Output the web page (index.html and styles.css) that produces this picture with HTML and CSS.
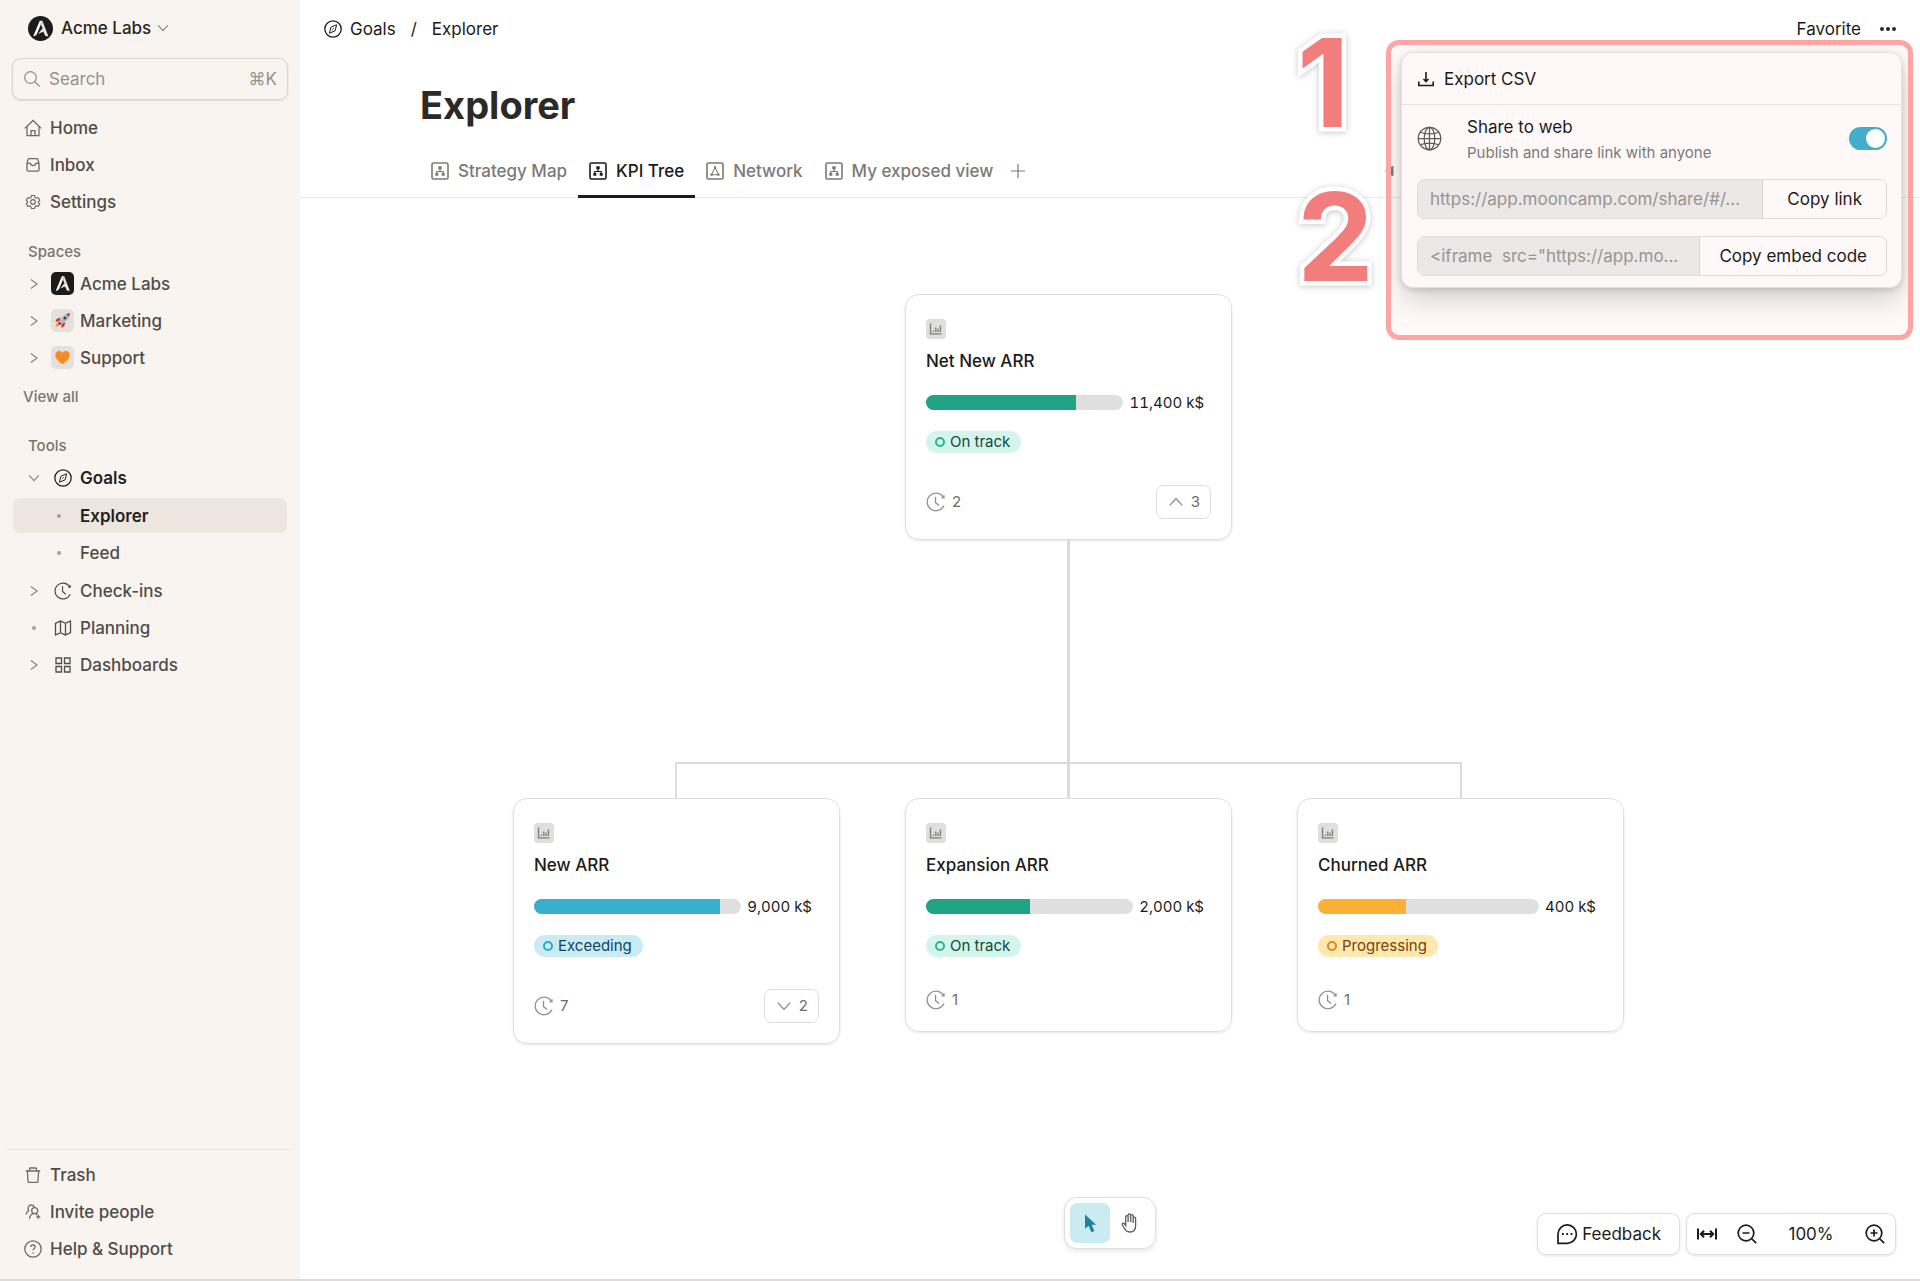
FILE: index.html
```html
<!DOCTYPE html>
<html lang="en">
<head>
  <meta charset="UTF-8" />
  <meta name="viewport" content="width=device-width, initial-scale=1" />
  <title>Explorer - Acme Labs</title>
  <link rel="stylesheet" href="styles.css">
</head>
<body>
  <!-- Icon set -->
  <svg class="sprite" aria-hidden="true">
    <symbol id="logo" viewBox="0 0 24 24">
      <path d="M5 19.5 11.3 4.5h2.5L8.6 17.1c-.9 1.8-2 2.4-3.6 2.4z" fill="#fff" />
      <path d="M13.8 4.5 19.6 19.5h-2.8l-2.2-4.4-5 2.2 3.6-4.5.8-.9-1.5-3.8z" fill="#e4e4e4" />
    </symbol>
    <symbol id="down" viewBox="0 0 16 16"><path d="M2.5 5L8 11l5.500-6" /></symbol>
    <symbol id="up" viewBox="0 0 16 16"><path d="M2.500 11L8 5l5.500 6" /></symbol>
    <symbol id="right" viewBox="0 0 16 16"><path d="M4.500 2.800L11.500 8l-7 5.200" /></symbol>
    <symbol id="search" viewBox="0 0 18 18"><circle cx="7.5" cy="7.5" r="5.8" /><path d="M11.8 11.8l4.9 4.7" /></symbol>
    <symbol id="home" viewBox="0 0 18 18"><path d="M.8 9.4L9 1.5l8.2 7.9M3 7.6v9h12v-9M7 16.5v-4.9h4v4.9" /></symbol>
    <symbol id="inbox" viewBox="0 0 18 18"><path d="M3 7.3l1.2-4Q4.500 2.700 5.200 2.700h7.600q.7 0 1 .6l1.200 4v6.500q0 1.400-1.400 1.400H4.400Q3 15.200 3 13.800zM3 7.300h3.400c.3 3 4.900 3 5.200 0H15" /></symbol>
    <symbol id="gear" viewBox="-1 -1 20 20"><path d="M7.300 1.800h3.400l.6 2.200 1.300.8 2.200-.6 1.700 2.900L15 8.700v.8l1.500 1.500-1.700 2.900-2.200-.6-1.300.8-.6 2.100H7.300l-.6-2.100-1.300-.8-2.200.6L1.500 11 3 9.500v-.8L1.500 7.100l1.700-2.900 2.200.6L6.700 4z" /><circle cx="9" cy="9" r="2.600" /></symbol>
    <symbol id="compass" viewBox="0 0 18 18"><circle cx="9" cy="9" r="8.200" /><path d="M12.600 4.800l-1.500 6-5.700 2.400 1.500-6zM8.300 9.700l1.400-1.400" stroke-width="1" /></symbol>
    <symbol id="clock" viewBox="0 0 20 20"><path d="M17.200 5A8.800 8.800 0 1 0 18 13.500M18 3.300v2.500h-2.500M9.500 4.800v5.800l3.500 3" /></symbol>
    <symbol id="map" viewBox="0 0 18 18"><path d="M1.500 4.300L6.500 2l5 2.300 5-2.300v11.700l-5 2.300-5-2.300-5 2.300zM6.500 2v11.700M11.500 4.300V16" /></symbol>
    <symbol id="grid" viewBox="0 0 18 18"><path d="M2 2h5.500v5.500H2zM10.500 2H16v5.500h-5.500zM2 10.500h5.500V16H2zM10.500 10.500H16V16h-5.500z" /></symbol>
    <symbol id="trash" viewBox="0 0 18 18"><path d="M1.800 5h14.400M5 5l1-3h6l1 3M3.300 5l.8 10.400q0 1 1 1h7.800q1 0 1-1L14.700 5" /></symbol>
    <symbol id="invite" viewBox="0 0 18 18"><path d="M2 11.500c.3-2 1.200-3 2.600-3.800C3.200 5 4.700 2 7.300 2c1.600 0 2.600.8 3 2.200M5.500 15.800c.3-2.600 1.500-4.400 3.300-5.300" /><circle cx="10.700" cy="7.700" r="3" /><path d="M12 10.800l1 1.200M14.300 11.800v4M12.300 13.800h4" /></symbol>
    <symbol id="help" viewBox="0 0 18 18"><circle cx="9" cy="9" r="8.200" /><path d="M6.800 7c.2-3 4.700-2.600 4.400 0-.2 1.400-2.200 1.500-2.200 3.200M9 12.200v1.200" /></symbol>
    <symbol id="tree" viewBox="0 0 18 18"><rect x="1" y="1" width="16" height="16" rx="1.500" /><path d="M9 7v2.500M5.800 11.500v-2h6.400v2" stroke-width="1.200" /><path d="M7.300 4.300h3.400v3H7.300zM4.300 10.900h3v2.800h-3zM10.700 10.900h3v2.800h-3z" fill="currentColor" stroke="none" /></symbol>
    <symbol id="network" viewBox="0 0 18 18"><rect x="1" y="1" width="16" height="16" rx="1.500" /><path d="M9 5.500L5.800 12M9 5.500l3.200 6.500M6 12.700h6" stroke-width="1" /><path d="M8 4.200h2v2.400H8zM4.500 11.500h2.200v2.200H4.500zM11.300 11.500h2.200v2.200h-2.200z" fill="currentColor" stroke="none" /></symbol>
    <symbol id="plus" viewBox="0 0 18 18"><path d="M9 2v14M2 9h14" /></symbol>
    <symbol id="chart" viewBox="0 0 14 14"><path d="M1.500 1.500v10.300h11M4.300 8.500V10M6.800 5.500V10M9 6.500V10M11.400 3.500V10" /></symbol>
    <symbol id="download" viewBox="0 0 18 18"><path d="M9 2v9.500M6.500 9L9 11.500 11.500 9M1.800 11.500v4h14.400v-4" /></symbol>
    <symbol id="globe" viewBox="0 0 26 26"><circle cx="13" cy="13" r="11.700" /><ellipse cx="13" cy="13" rx="5.500" ry="11.700" /><path d="M13 1.300v23.400M1.300 13h23.400M3.500 6.500c5 2.400 14 2.400 19 0M3.500 19.500c5-2.400 14-2.400 19 0" /></symbol>
    <symbol id="cursor" viewBox="0 0 22 22"><path d="M6 2.500v14.300l3.600-3 2.800 6.500 3-1.300-2.800-6.200h4.600z" fill="currentColor" stroke="none" /></symbol>
    <symbol id="hand" viewBox="0 0 22 22"><path d="M6.700 12V4.800c0-1.700 2.400-1.700 2.400 0V10 3.200c0-1.800 2.600-1.800 2.600 0V10 3.900c0-1.700 2.500-1.700 2.500 0V11 6.300c0-1.700 2.400-1.700 2.400 0v7.200c0 4-2 6.500-5.500 6.500-4.100 0-5.200-2.500-7.600-6.800-.9-1.700 1-2.700 2-1.400l1.200 1.700z" /></symbol>
    <symbol id="chat" viewBox="0 0 22 22"><path d="M2 20.300V11A9.200 9.200 0 1 1 11.200 20.300z" /><path d="M6 11h1.800M10.300 11h1.800M14.600 11h1.800" stroke-width="2" /></symbol>
    <symbol id="fit" viewBox="0 0 22 22"><path d="M2 5.500v11M20 5.500v11M5 11h12M8 7.800L4.800 11 8 14.200M14 7.800l3.200 3.200-3.200 3.200" stroke-width="2" /></symbol>
    <symbol id="zoom-out" viewBox="0 0 22 22"><circle cx="10" cy="10" r="7.800" /><path d="M15.500 15.500l4.700 4.700M6.500 10h7" /></symbol>
    <symbol id="zoom-in" viewBox="0 0 22 22"><circle cx="10" cy="10" r="7.800" /><path d="M15.500 15.500l4.700 4.700M6.500 10h7M10 6.500v7" /></symbol>
    <symbol id="collapse" viewBox="0 0 10 12"><path d="M9.500 1v10L5 10V7L0 6l5-1V2z" fill="currentColor" stroke="none" /></symbol>
  </svg>

  <div class="app">
    <aside class="sidebar">
      <button class="workspace" type="button">
        <svg class="workspace-logo"><use href="#logo" /></svg>
        Acme Labs
        <svg class="icon icon-xs"><use href="#down" /></svg>
      </button>
      <label class="search">
        <svg class="icon"><use href="#search" /></svg>
        <input type="search" placeholder="Search" aria-label="Search" />
        <kbd>⌘K</kbd>
      </label>

      <nav class="menu">
        <a href="#"><svg class="icon"><use href="#home" /></svg>Home</a>
        <a href="#"><svg class="icon"><use href="#inbox" /></svg>Inbox</a>
        <a href="#"><svg class="icon"><use href="#gear" /></svg>Settings</a>
      </nav>

      <h2 class="section-title">Spaces</h2>
      <nav class="tree-menu">
        <a href="#"><svg class="icon caret"><use href="#right" /></svg><svg class="space space-dark"><use href="#logo" /></svg>Acme Labs</a>
        <a href="#"><svg class="icon caret"><use href="#right" /></svg>
          <svg class="space" viewBox="0 0 23 23">
            <path d="M9.500 8.500L5.500 10 4.500 13l4-1zM14.500 13.500l-1.500 4-3 1 1-4z" fill="#d52b35" />
            <path d="M8 13c-2 0-3 2-3.500 5 3-.5 4.700-1.500 4.800-3.500z" fill="#f8952b" />
            <path d="M18.800 4.200c-4.200.2-8 3.300-10.600 8.300l2.500 2.500c5-2.600 8-6.600 8.100-10.800z" fill="#aebbc7" />
            <path d="M18.800 4.200l-3.600.9 2.700 2.700zM8.200 12.500l2.500 2.500-1.900.9-1.500-1.500z" fill="#b91f32" />
            <circle cx="14" cy="9" r="1.500" fill="#234e79" />
          </svg>Marketing</a>
        <a href="#"><svg class="icon caret"><use href="#right" /></svg>
          <svg class="space" viewBox="0 0 23 23"><path d="M11.500 18.300C7.500 15.500 4.300 12.500 4.300 8.800c0-4 5-5.300 7.200-1.900 2.200-3.400 7.200-2.100 7.200 1.900 0 3.700-3.200 6.700-7.200 9.500z" fill="#f78b1f" /></svg>Support</a>
      </nav>
      <a class="view-all" href="#">View all</a>

      <h2 class="section-title">Tools</h2>
      <nav class="tree-menu">
        <a class="strong" href="#"><svg class="icon caret"><use href="#down" /></svg><svg class="icon tool"><use href="#compass" /></svg>Goals</a>
        <div class="submenu">
          <a class="active" href="#"><span class="bullet"></span>Explorer</a>
          <a href="#"><span class="bullet"></span>Feed</a>
        </div>
        <a href="#"><svg class="icon caret"><use href="#right" /></svg><svg class="icon tool"><use href="#clock" /></svg>Check-ins</a>
        <a href="#"><span class="bullet"></span><svg class="icon tool"><use href="#map" /></svg>Planning</a>
        <a href="#"><svg class="icon caret"><use href="#right" /></svg><svg class="icon tool"><use href="#grid" /></svg>Dashboards</a>
      </nav>

      <nav class="menu menu-bottom">
        <a href="#"><svg class="icon"><use href="#trash" /></svg>Trash</a>
        <a href="#"><svg class="icon"><use href="#invite" /></svg>Invite people</a>
        <a href="#"><svg class="icon"><use href="#help" /></svg>Help &amp; Support</a>
      </nav>
    </aside>

    <main class="main">
      <header class="topbar">
        <nav class="breadcrumb">
          <a href="#"><svg class="icon"><use href="#compass" /></svg>Goals</a>
          <span>/</span>
          <a href="#">Explorer</a>
        </nav>
        <div class="top-actions">
          <button type="button">Favorite</button>
          <button class="dots" type="button" aria-label="More"><i></i><i></i><i></i></button>
        </div>
      </header>

      <h1>Explorer</h1>
      <nav class="tabs">
        <a href="#"><svg class="icon"><use href="#tree" /></svg>Strategy Map</a>
        <a class="active" href="#"><svg class="icon"><use href="#tree" /></svg>KPI Tree</a>
        <a href="#"><svg class="icon"><use href="#network" /></svg>Network</a>
        <a href="#"><svg class="icon"><use href="#tree" /></svg>My exposed view</a>
        <button class="add-view" type="button" aria-label="Add view"><svg class="icon"><use href="#plus" /></svg></button>
        <button class="collapse" type="button" aria-label="Collapse"><svg class="icon"><use href="#collapse" /></svg></button>
      </nav>

      <section class="canvas">
        <div class="kpi-tree">
          <article class="card">
            <svg class="icon kpi-icon"><use href="#chart" /></svg>
            <h3>Net New ARR</h3>
            <div class="progress"><div class="bar"><div class="fill green" style="width: 76%"></div></div>11,400 k$</div>
            <span class="status on-track">On track</span>
            <footer><span class="checkins"><svg class="icon"><use href="#clock" /></svg>2</span>
              <button type="button"><svg class="icon"><use href="#up" /></svg>3</button></footer>
          </article>
          <div class="trunk"></div>
          <div class="fork"></div>
          <div class="children">
            <article class="card">
              <svg class="icon kpi-icon"><use href="#chart" /></svg>
              <h3>New ARR</h3>
              <div class="progress"><div class="bar"><div class="fill blue" style="width: 90%"></div></div>9,000 k$</div>
              <span class="status exceeding">Exceeding</span>
              <footer><span class="checkins"><svg class="icon"><use href="#clock" /></svg>7</span>
                <button type="button"><svg class="icon"><use href="#down" /></svg>2</button></footer>
            </article>
            <article class="card">
              <svg class="icon kpi-icon"><use href="#chart" /></svg>
              <h3>Expansion ARR</h3>
              <div class="progress"><div class="bar"><div class="fill green" style="width: 50%"></div></div>2,000 k$</div>
              <span class="status on-track">On track</span>
              <footer><span class="checkins"><svg class="icon"><use href="#clock" /></svg>1</span></footer>
            </article>
            <article class="card">
              <svg class="icon kpi-icon"><use href="#chart" /></svg>
              <h3>Churned ARR</h3>
              <div class="progress"><div class="bar"><div class="fill orange" style="width: 40%"></div></div>400 k$</div>
              <span class="status progressing">Progressing</span>
              <footer><span class="checkins"><svg class="icon"><use href="#clock" /></svg>1</span></footer>
            </article>
          </div>
        </div>

        <div class="mode-bar">
          <button class="active" type="button" aria-label="Select"><svg class="icon"><use href="#cursor" /></svg></button>
          <button type="button" aria-label="Pan"><svg class="icon"><use href="#hand" /></svg></button>
        </div>
        <div class="view-controls">
          <button class="feedback" type="button"><svg class="icon"><use href="#chat" /></svg>Feedback</button>
          <div class="zoom">
            <button type="button" aria-label="Fit width"><svg class="icon"><use href="#fit" /></svg></button>
            <button type="button" aria-label="Zoom out"><svg class="icon"><use href="#zoom-out" /></svg></button>
            <output>100%</output>
            <button type="button" aria-label="Zoom in"><svg class="icon"><use href="#zoom-in" /></svg></button>
          </div>
        </div>
      </section>
    </main>

    <!-- Share menu with its numbered callout -->
    <div class="callout">
      <div class="steps"><span>1</span><span>2</span></div>
      <div class="frame">
        <div class="share-menu">
          <button class="export" type="button"><svg class="icon"><use href="#download" /></svg>Export CSV</button>
          <div class="share-body">
            <div class="share-row">
              <svg class="icon globe"><use href="#globe" /></svg>
              <label for="share">Share to web<small>Publish and share link with anyone</small></label>
              <input class="switch" id="share" type="checkbox" role="switch" checked />
            </div>
            <div class="copy-field">
              <input type="text" aria-label="Share link" value="https://app.mooncamp.com/share/#/..." readonly />
              <button type="button">Copy link</button>
            </div>
            <div class="copy-field">
              <input type="text" aria-label="Embed code" value="&lt;iframe  src=&quot;https://app.mo..." readonly />
              <button type="button">Copy embed code</button>
            </div>
          </div>
        </div>
      </div>
    </div>
  </div>
</body>
</html>
```

FILE: styles.css
```css
*, *::before {
  box-sizing: border-box;
}
body {
  margin: 0;
  font-family: Inter, "Liberation Sans", sans-serif;
  font-size: 17px;
  line-height: 24px;
  color: #1d1b19;
  background: #fff;
}
a {
  color: inherit;
  text-decoration: none;
}
button, input {
  font: inherit;
  color: inherit;
  background: none;
  border: 0;
  padding: 0;
  margin: 0;
}
h1, h2, h3 {
  margin: 0;
}
.sprite {
  display: none;
}
.icon {
  width: 18px;
  height: 18px;
  flex: none;
  fill: none;
  stroke: currentColor;
  stroke-width: 1.3;
}
.icon-xs {
  width: 14px;
  height: 14px;
  color: #85817d;
}
.app {
  position: relative;
  display: flex;
  min-height: 100vh;
  border-bottom: 2px solid #dcdadb;
}

/* Sidebar */
.sidebar {
  display: flex;
  flex-direction: column;
  flex: none;
  width: 300px;
  padding: 8px 7px 13px;
  background: #f9f4f0;
  font-weight: 500;
  color: #504c48;
}
.workspace {
  display: flex;
  align-items: center;
  gap: 8px;
  height: 40px;
  padding-left: 21px;
  color: #292623;
}
.workspace-logo {
  width: 25px;
  height: 25px;
  border-radius: 50%;
  background: #1c1c1c;
}
.workspace .icon {
  margin-left: -3px;
}
.search {
  display: flex;
  align-items: center;
  gap: 8px;
  height: 42px;
  margin: 10px 5px 10px;
  padding: 0 10px;
  border: 1px solid #d9d4d0;
  border-radius: 9px;
  box-shadow: 0 1px 2px rgba(0, 0, 0, .12);
  color: #96918c;
}
.search input {
  flex: 1;
  min-width: 0;
  font-weight: 400;
  outline: 0;
}
.search input::placeholder {
  color: #96918c;
}
.search kbd {
  font: inherit;
  font-weight: 400;
}
.menu, .tree-menu, .submenu {
  display: flex;
  flex-direction: column;
  gap: 2px;
}
.menu a, .tree-menu a {
  display: flex;
  align-items: center;
  height: 35px;
  margin: 0 6px;
  border-radius: 7px;
}
.menu a {
  gap: 8px;
  padding-left: 11px;
}
.menu .icon {
  color: #6f6a66;
}
.section-title {
  padding: 21px 0 2px 21px;
  font-size: 15px;
  font-weight: 500;
  color: #7a7571;
}
.tree-menu a {
  gap: 6px;
  padding-left: 14px;
}
.caret {
  width: 14px;
  height: 14px;
  color: #85817d;
}
.space {
  width: 23px;
  height: 23px;
  margin-left: 4px;
  border-radius: 5px;
  background: #e4e0dc;
}
.space-dark {
  background: #1c1c1c;
}
.tool {
  margin: 0 2px 0 7px;
}
.bullet {
  width: 4px;
  height: 4px;
  margin: 0 5px;
  border-radius: 50%;
  background: #a5a09b;
}
.submenu {
  padding: 1px 0;
}
.submenu .bullet {
  margin: 0 13px 0 30px;
}
.tree-menu .strong {
  font-weight: 600;
  color: #24211f;
}
.tree-menu .active {
  background: #ede7e0;
  font-weight: 600;
  color: #24211f;
}
.view-all {
  padding: 10px 16px 0;
  font-size: 15px;
  color: #7a7571;
}
.view-all + .section-title {
  padding-top: 25px;
}
.menu-bottom {
  margin-top: auto;
  padding-top: 7px;
  border-top: 1px solid #e7e2de;
}

/* Page head */
.main {
  display: flex;
  flex-direction: column;
  flex: 1;
  min-width: 0;
}
.topbar {
  display: flex;
  align-items: center;
  justify-content: space-between;
  height: 57px;
  padding: 0 24px;
}
.breadcrumb, .breadcrumb a, .top-actions {
  display: flex;
  align-items: center;
}
.breadcrumb {
  gap: 15px;
}
.breadcrumb a {
  gap: 8px;
}
.top-actions {
  gap: 19px;
}
.dots {
  display: flex;
  gap: 2px;
}
.dots i {
  width: 4px;
  height: 4px;
  border-radius: 50%;
  background: #2b2927;
}
h1 {
  padding: 24px 120px 0;
  font-size: 38px;
  line-height: 48px;
  font-weight: 700;
  color: #2c2a28;
}
.tabs {
  display: flex;
  padding: 18px 120px 0;
  border-bottom: 1px solid #e9e9e9;
  color: #7b7976;
}
.tabs a, .tabs button {
  display: flex;
  align-items: center;
  gap: 9px;
  height: 51px;
  margin-bottom: -1px;
  padding: 0 11px;
  border-bottom: 3px solid transparent;
  font-weight: 500;
}
.tabs .icon {
  stroke-width: 1.6;
}
.tabs .add-view {
  padding: 0 5px;
}
.tabs .add-view .icon {
  stroke-width: 1.2;
}
.tabs .active {
  border-color: #1d1b19;
  color: #1d1b19;
}
/* peeks out from behind the share menu */
.tabs .collapse {
  margin-left: auto;
  margin-right: 406px;
  padding: 0;
}
.tabs .collapse .icon {
  width: 10px;
  height: 12px;
}

/* Tree canvas */
.canvas {
  position: relative;
  flex: 1;
  padding: 96px 0 120px 213px;
}
.kpi-tree {
  display: flex;
  flex-direction: column;
  align-items: center;
  width: max-content;
}
.card {
  width: 327px;
  padding: 24px 20px 20px;
  border: 1px solid #dfdfdf;
  border-radius: 14px;
  box-shadow: 0 1px 3px rgba(0, 0, 0, .1);
}
.kpi-icon {
  display: block;
  width: 20px;
  height: 20px;
  padding: 3px;
  border-radius: 4px;
  background: #dfdfdd;
  color: #7e7c79;
}
.card h3 {
  margin: 10px 0 22px;
  font-size: 17px;
  font-weight: 500;
}
.progress {
  display: flex;
  align-items: center;
  gap: 6px;
  height: 15px;
  padding-right: 7px;
  font-size: 15px;
  font-variant-numeric: tabular-nums;
}
.bar {
  flex: 1;
  height: 15px;
  border-radius: 8px;
  background: #dfdfdf;
  overflow: hidden;
}
.fill {
  height: 100%;
}
.green {
  background: #20a284;
}
.blue {
  background: #38afcc;
}
.orange {
  background: #fbb034;
}
.status {
  display: flex;
  align-items: center;
  gap: 5px;
  width: max-content;
  height: 22px;
  margin: 21px 0 32px;
  padding: 0 11px 0 9px;
  border-radius: 11px;
  font-size: 15px;
}
.status::before {
  content: "";
  width: 10px;
  height: 10px;
  border: 2px solid;
  border-radius: 50%;
}
.on-track {
  background: #d3f5eb;
  color: #14483b;
}
.on-track::before {
  border-color: #27b591;
}
.exceeding {
  background: #c9ebf4;
  color: #12455a;
}
.exceeding::before {
  border-color: #2da8c8;
}
.progressing {
  background: #ffe8ae;
  color: #77400c;
}
.progressing::before {
  border-color: #d98a1b;
}
.card footer {
  display: flex;
  align-items: center;
  justify-content: space-between;
  min-height: 22px;
  font-size: 15px;
  line-height: 20px;
  color: #6f6d6b;
}
.checkins {
  display: flex;
  align-items: center;
  gap: 6px;
}
.checkins .icon {
  width: 20px;
  height: 20px;
  color: #92908e;
}
.card footer button {
  display: flex;
  align-items: center;
  gap: 6px;
  height: 34px;
  padding: 0 10px;
  border: 1px solid #dfdfdf;
  border-radius: 7px;
}
.card footer button .icon {
  color: #92908e;
}
.trunk {
  width: 3px;
  height: 222px;
  background: #dcdcdc;
}
.fork {
  display: flex;
  justify-content: center;
  width: 787px;
  height: 36px;
  border: solid #dcdcdc;
  border-width: 2px 2px 0;
}
.fork::before {
  content: "";
  width: 3px;
  background: #dcdcdc;
}
.children {
  display: flex;
  align-items: flex-start;
  gap: 65px;
}

/* Floating controls */
.mode-bar, .view-controls {
  position: absolute;
  display: flex;
}
.mode-bar {
  bottom: 30px;
  left: 50%;
  transform: translateX(-50%);
  padding: 5px;
  border: 1px solid #dfdfdf;
  border-radius: 13px;
  background: #fff;
  box-shadow: 0 2px 5px rgba(0, 0, 0, .1);
}
.mode-bar button {
  display: flex;
  align-items: center;
  justify-content: center;
  width: 40px;
  height: 40px;
  border-radius: 7px;
  color: #5d5b59;
}
.mode-bar .active {
  background: #cbebf3;
  color: #21829d;
}
.mode-bar .icon, .view-controls .icon {
  width: 22px;
  height: 22px;
}
.view-controls {
  right: 24px;
  bottom: 24px;
  gap: 6px;
}
.view-controls .icon {
  stroke-width: 1.7;
}
.feedback, .zoom {
  display: flex;
  align-items: center;
  height: 42px;
  border: 1px solid #dfdfdf;
  border-radius: 9px;
  background: #fff;
  box-shadow: 0 1px 3px rgba(0, 0, 0, .1);
}
.feedback {
  gap: 4px;
  padding: 0 18px;
}
.zoom {
  padding: 0 9px;
}
.zoom button {
  display: flex;
}
.zoom button + button {
  margin-left: 18px;
}
.zoom output {
  width: 106px;
  text-align: center;
}

/* Share menu */
.callout {
  position: absolute;
  top: 6px;
  right: 7px;
  display: flex;
  align-items: flex-start;
}
.steps {
  display: flex;
  flex-direction: column;
  width: 89px;
  font-size: 122px;
  line-height: 154px;
  font-weight: 700;
  color: #f17d7c;
  -webkit-text-stroke: 9px #fff;
  paint-order: stroke fill;
  filter: drop-shadow(0 1px 3px rgba(0, 0, 0, .22));
}
.frame {
  margin-top: 34px;
  padding: 7px 6px 47px 10px;
  border: 5px solid #fda5a3;
  border-radius: 13px;
  background: rgba(255, 120, 110, .04);
  overflow: hidden;
}
.share-menu {
  width: 501px;
  border: 1px solid #e6e0df;
  border-radius: 12px;
  background: #fef9f8;
  box-shadow: 0 12px 28px rgba(0, 0, 0, .16), 0 2px 6px rgba(0, 0, 0, .14);
}
.export {
  display: flex;
  align-items: center;
  gap: 9px;
  width: 100%;
  height: 52px;
  padding: 0 15px;
  border-bottom: 1px solid #e9e3e2;
}
.export .icon {
  stroke-width: 1.6;
}
.share-body {
  display: flex;
  flex-direction: column;
  gap: 17px;
  padding: 9px 14px 11px 15px;
}
.share-row {
  display: flex;
  align-items: center;
  height: 48px;
}
.globe {
  width: 25px;
  height: 25px;
  color: #5e5b59;
}
.share-row label {
  flex: 1;
  padding: 3px 0 0 25px;
}
.share-row small {
  display: block;
  margin-top: 2px;
  font-size: 15px;
  color: #7d7876;
}
.switch {
  appearance: none;
  display: flex;
  justify-content: flex-end;
  width: 38px;
  height: 23px;
  padding: 2px;
  border-radius: 12px;
  background: #42aeca;
}
.switch::before {
  content: "";
  width: 19px;
  height: 19px;
  border-radius: 50%;
  background: #fff;
}
.copy-field {
  display: flex;
  height: 40px;
  border: 1px solid #e0dad8;
  border-radius: 7px;
  overflow: hidden;
}
.copy-field input {
  flex: 1;
  min-width: 0;
  padding: 0 12px;
  border-right: 1px solid #d6d1cf;
  background: #ece8e7;
  color: #989492;
}
.copy-field button {
  padding: 0 24px;
}
.copy-field + .copy-field button {
  padding: 0 19px;
}
```
